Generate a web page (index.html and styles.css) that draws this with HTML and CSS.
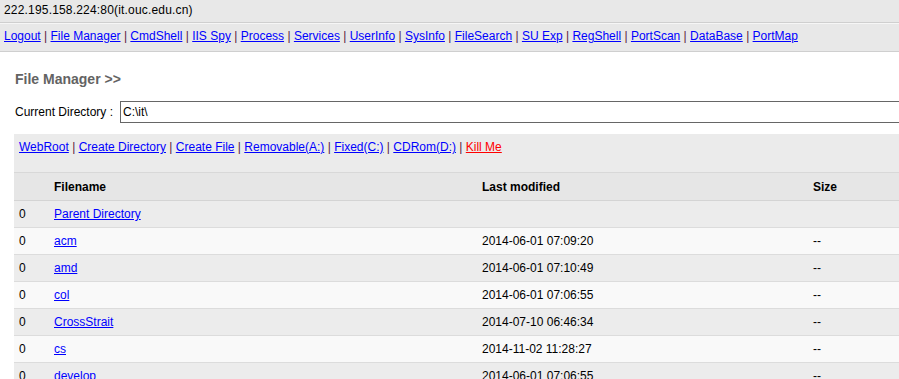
FILE: index.html
```html
<!DOCTYPE html>
<html>
<head>
<meta charset="utf-8">
<title>File Manager</title>
<link rel="stylesheet" href="styles.css">
</head>
<body>
<div class="topbar">222.195.158.224:80(it.ouc.edu.cn)</div>
<div class="nav">
  <a href="#">Logout</a> <span class="sep">|</span>
  <a href="#">File Manager</a> <span class="sep">|</span>
  <a href="#">CmdShell</a> <span class="sep">|</span>
  <a href="#">IIS Spy</a> <span class="sep">|</span>
  <a href="#">Process</a> <span class="sep">|</span>
  <a href="#">Services</a> <span class="sep">|</span>
  <a href="#">UserInfo</a> <span class="sep">|</span>
  <a href="#">SysInfo</a> <span class="sep">|</span>
  <a href="#">FileSearch</a> <span class="sep">|</span>
  <a href="#">SU Exp</a> <span class="sep">|</span>
  <a href="#">RegShell</a> <span class="sep">|</span>
  <a href="#">PortScan</a> <span class="sep">|</span>
  <a href="#">DataBase</a> <span class="sep">|</span>
  <a href="#">PortMap</a>
</div>
<div class="main">
  <h2 class="title">File Manager &gt;&gt;</h2>
  <div class="dirrow">
    <span class="dirlabel">Current Directory :</span>
    <input class="dirinput" type="text" value="C:\it\">
  </div>
  <div class="toolbox">
    <a href="#">WebRoot</a> <span class="sep">|</span>
    <a href="#">Create Directory</a> <span class="sep">|</span>
    <a href="#">Create File</a> <span class="sep">|</span>
    <a href="#">Removable(A:)</a> <span class="sep">|</span>
    <a href="#">Fixed(C:)</a> <span class="sep">|</span>
    <a href="#">CDRom(D:)</a> <span class="sep">|</span>
    <a href="#" class="kill">Kill Me</a>
  </div>
  <table class="files">
    <colgroup>
      <col class="c0"><col class="c1"><col class="c2"><col class="c3">
    </colgroup>
    <thead>
      <tr class="head"><td></td><td>Filename</td><td>Last modified</td><td>Size</td></tr>
    </thead>
    <tbody>
      <tr class="alt1"><td>0</td><td><a href="#">Parent Directory</a></td><td></td><td></td></tr>
      <tr class="alt2"><td>0</td><td><a href="#">acm</a></td><td>2014-06-01 07:09:20</td><td>--</td></tr>
      <tr class="alt1"><td>0</td><td><a href="#">amd</a></td><td>2014-06-01 07:10:49</td><td>--</td></tr>
      <tr class="alt2"><td>0</td><td><a href="#">col</a></td><td>2014-06-01 07:06:55</td><td>--</td></tr>
      <tr class="alt1"><td>0</td><td><a href="#">CrossStrait</a></td><td>2014-07-10 06:46:34</td><td>--</td></tr>
      <tr class="alt2"><td>0</td><td><a href="#">cs</a></td><td>2014-11-02 11:28:27</td><td>--</td></tr>
      <tr class="alt1"><td>0</td><td><a href="#">develop</a></td><td>2014-06-01 07:06:55</td><td>--</td></tr>
    </tbody>
  </table>
</div>
</body>
</html>
```
FILE: styles.css
```css
html {
  overflow: hidden;
}
body {
  margin: 0;
  background: #ffffff;
  color: #000000;
  font-family: "Liberation Sans", Arial, sans-serif;
  font-size: 12px;
  line-height: 16px;
}
a {
  color: #0000ff;
  text-decoration: underline;
}
a.kill {
  color: #ff0000;
}
.sep {
  color: #5a2040;
}
.topbar {
  background: #e8e8e8;
  padding: 2px 4px 4px;
  height: 16px;
  border-bottom: 1px solid #cfcfcf;
  white-space: nowrap;
  letter-spacing: 0.18px;
}
.nav {
  background: #e8e8e8;
  border-top: 1px solid #f6f6f6;
  border-bottom: 1px solid #cfcfcf;
  padding: 4px 4px 7px;
  white-space: nowrap;
}
.main {
  width: 1000px;
  margin-left: 14px;
}
.title {
  margin: 15px 0 0 1px;
  padding: 0;
  height: 24px;
  line-height: 24px;
  font-size: 14px;
  font-weight: bold;
  color: #636363;
}
.dirrow {
  display: flex;
  align-items: center;
  margin-top: 10px;
  margin-left: 1px;
}
.dirlabel {
  width: 105px;
  white-space: nowrap;
}
.dirinput {
  box-sizing: border-box;
  width: 880px;
  height: 22px;
  margin: 0;
  padding: 2px;
  border: 1px solid #666666;
  background: #ffffff;
  font-family: "Liberation Sans", Arial, sans-serif;
  font-size: 12px;
  color: #000000;
  outline: none;
}
.toolbox {
  margin-top: 11px;
  background: #ebebeb;
  padding: 5px 5px 17px;
  white-space: nowrap;
}
.files {
  width: 1000px;
  table-layout: fixed;
  border-collapse: collapse;
}
.c0 { width: 35px; }
.c1 { width: 428px; }
.c2 { width: 331px; }
.files td {
  padding: 0 5px;
  white-space: nowrap;
  vertical-align: middle;
}
.head td {
  background: #e6e6e6;
  border-top: 1px solid #d8d8d8;
  border-bottom: 1px solid #d4d4d4;
  height: 27px;
  font-weight: bold;
}
.alt1 td {
  background: #ececec;
  border-bottom: 1px solid #dcdcdc;
  height: 26px;
}
.alt2 td {
  background: #f9f9f9;
  border-bottom: 1px solid #dcdcdc;
  height: 26px;
}
```
